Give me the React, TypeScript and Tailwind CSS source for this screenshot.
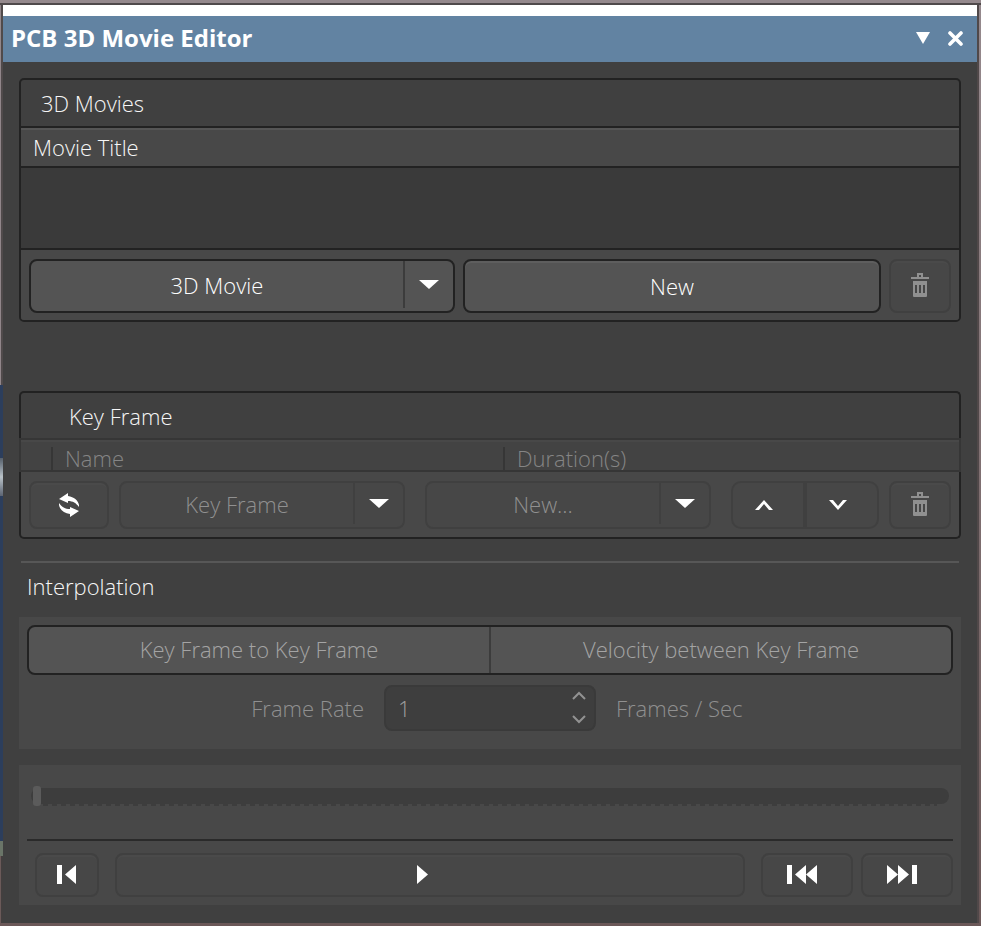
import React from "react";

const dimButton =
  "flex items-center justify-center rounded-lg border-2 border-[#404040] bg-[#474747] shadow-[inset_0_2px_0_#4a4a4a]";

function CaretDown() {
  return (
    <svg width="20" height="9" viewBox="0 0 20 9" aria-hidden="true">
      <path d="M0 0H20L10 9Z" fill="#fff" />
    </svg>
  );
}

function Trash() {
  return (
    <svg width="18" height="25" viewBox="0 0 18 25" aria-hidden="true" fill="#909090">
      <path fillRule="evenodd" d="M6 0H12V4H18V6H0V4H6ZM8 2V4H10V2Z" />
      <path
        fillRule="evenodd"
        d="M2 8H16V23Q16 24 15 24H3Q2 24 2 23ZM4 12V20H6V12ZM8 12V20H10V12ZM12 12V20H14V12Z"
      />
    </svg>
  );
}

function Refresh() {
  return (
    <svg width="20" height="24" viewBox="0 0 20 24" aria-hidden="true" fill="#fff">
      <path d="M0 6L9 0V3C15 4 19 7 20 12V14C17 10 14 8 9 8V10Z" />
      <path d="M20 18L11 24V21C5 20 1 17 0 12V10C3 14 6 16 11 16V14Z" />
    </svg>
  );
}

function Chevron({ up = false }: { up?: boolean }) {
  return (
    <svg width="18" height="10" viewBox="0 0 18 10" aria-hidden="true">
      <path d={up ? "M0 10L9 0L18 10H14L9 4L4 10Z" : "M0 0L9 10L18 0H14L9 6L4 0Z"} fill="#fff" />
    </svg>
  );
}

function SpinArrow({ up = false }: { up?: boolean }) {
  return (
    <svg width="14" height="9" viewBox="0 0 14 9" aria-hidden="true">
      <path d={up ? "M1 8L7 2L13 8" : "M1 1L7 7L13 1"} fill="none" stroke="#929292" strokeWidth="2" />
    </svg>
  );
}

function SplitButton({
  label,
  menuLabel,
  className,
  divider,
}: {
  label: string;
  menuLabel: string;
  className: string;
  divider: string;
}) {
  return (
    <div className={`flex rounded-lg border-2 ${className}`}>
      <button type="button" className="flex-1 pb-[2px]">
        {label}
      </button>
      <button
        type="button"
        aria-label={menuLabel}
        aria-haspopup="menu"
        className={`mb-[3px] flex w-[50px] items-center justify-center border-l-2 ${divider}`}
      >
        <CaretDown />
      </button>
    </div>
  );
}

function LeftEdge() {
  return (
    <div className="flex w-[3px] shrink-0 flex-col" aria-hidden="true">
      <div className="h-[380px] border-r-2 border-[#504a4b] bg-[#91868a]" />
      <div className="h-[73px] bg-[#2c3e5c]" />
      <div className="h-[38px] bg-gradient-to-b from-[#56606c] via-[#b9c2c8] to-[#5c6472]" />
      <div className="h-[345px] bg-[#2c3e5c]" />
      <div className="h-[15px] bg-[#6a7568]" />
      <div className="flex-1 border-r-2 border-[#433f3f] bg-[#6b5a59]" />
    </div>
  );
}

export default function App() {
  return (
    <div className="flex min-h-screen flex-col border-b-[3px] border-[#6b5858] bg-[#95898d] font-['Open_Sans','Noto_Sans',sans-serif] text-[22px] leading-7 font-light text-[#f6f6f6]">
      <div className="h-[3px]" />
      <div className="h-[2px] bg-[#504a4b]" />
      <div className="flex flex-1">
        <LeftEdge />
        <main className="flex min-w-0 flex-1 flex-col bg-[#404040]">
          <div className="h-[11px] bg-white" />
          <header className="flex h-[46px] items-center bg-[#6283a2] pr-[14px] pb-[2px] pl-2 text-white">
            <h1 className="flex-1 text-2xl leading-7 font-bold">PCB 3D Movie Editor</h1>
            <button type="button" aria-label="Panel options" className="mr-[18px]">
              <svg width="14" height="12" viewBox="0 0 14 12" aria-hidden="true">
                <path d="M0 0H14L7 12Z" fill="#fff" />
              </svg>
            </button>
            <button type="button" aria-label="Close">
              <svg width="15" height="15" viewBox="0 0 15 15" aria-hidden="true">
                <path d="M2 2L13 13M13 2L2 13" stroke="#fff" strokeWidth="3.6" strokeLinecap="round" />
              </svg>
            </button>
          </header>

          <div className="flex flex-col px-4 pt-4">
            <section className="overflow-hidden rounded-[5px] border-2 border-[#222]">
              <h2 className="flex h-[46px] items-center px-5">3D Movies</h2>
              <div className="h-[124px] border-y-2 border-[#222] bg-[#3a3a3a]">
                <table className="w-full border-collapse">
                  <thead>
                    <tr>
                      <th className="h-[39px] border-b-2 border-[#222] bg-[#484848] px-3 text-left font-light shadow-[inset_0_2px_0_#555]">
                        Movie Title
                      </th>
                    </tr>
                  </thead>
                </table>
              </div>
              <div className="flex gap-2 bg-[#484848] px-2 pt-[9px] pb-[7px] text-white">
                <SplitButton
                  label="3D Movie"
                  menuLabel="3D Movie menu"
                  className="h-[54px] flex-[426] border-[#222] bg-[#545454]"
                  divider="border-[#3c3c3c]"
                />
                <button
                  type="button"
                  className="h-[54px] flex-[418] rounded-lg border-2 border-[#222] bg-[#545454] shadow-[inset_0_2px_0_#5e5e5e]"
                >
                  New
                </button>
                <button type="button" disabled aria-label="Delete movie" className={`h-[54px] w-[62px] pb-[2px] ${dimButton}`}>
                  <Trash />
                </button>
              </div>
            </section>

            <section className="mt-[69px]">
              <h2 className="flex h-[47px] items-center rounded-t-[5px] border-2 border-b-0 border-[#222] px-12">
                Key Frame
              </h2>
              <div className="h-[34px] overflow-hidden border-2 border-[#363636] bg-[#434343] shadow-[inset_0_2px_0_#484848]">
                <table className="mt-[7px] w-full table-fixed border-collapse leading-[23px] text-[#858585]">
                  <thead>
                    <tr>
                      <td className="w-[31px] p-0" />
                      <th className="w-[452px] border-l-2 border-[#363636] p-0 pl-3 text-left font-light">Name</th>
                      <th className="border-l-2 border-[#363636] p-0 pl-3 text-left font-light">Duration(s)</th>
                    </tr>
                  </thead>
                </table>
              </div>
              <div className="flex rounded-b-[5px] border-2 border-t-0 border-[#222] bg-[#484848] px-2 pt-[9px] pb-2 text-[#909090]">
                <button type="button" aria-label="Refresh" className={`h-12 w-20 ${dimButton}`}>
                  <Refresh />
                </button>
                <SplitButton
                  label="Key Frame"
                  menuLabel="Key Frame menu"
                  className="ml-[10px] h-12 flex-1 border-[#404040] bg-[#474747]"
                  divider="border-[#404040]"
                />
                <SplitButton
                  label="New..."
                  menuLabel="New key frame menu"
                  className="ml-5 h-12 flex-1 border-[#404040] bg-[#474747]"
                  divider="border-[#404040]"
                />
                <div className="ml-5 flex h-12 w-[148px] rounded-[10px] border-2 border-[#404040] bg-[#474747]">
                  <button
                    type="button"
                    aria-label="Move up"
                    className="flex flex-1 items-center justify-center border-r-2 border-[#404040] pr-2"
                  >
                    <Chevron up />
                  </button>
                  <button
                    type="button"
                    aria-label="Move down"
                    className="flex flex-1 items-center justify-center border-l-2 border-[#404040] pr-2"
                  >
                    <Chevron />
                  </button>
                </div>
                <button
                  type="button"
                  disabled
                  aria-label="Delete key frame"
                  className={`ml-[10px] h-12 w-[62px] pb-[2px] ${dimButton}`}
                >
                  <Trash />
                </button>
              </div>
            </section>

            <hr className="mx-[2px] mt-[22px] border-t-2 border-[#575757]" />
            <h2 className="flex h-[54px] items-center px-2 pb-2">Interpolation</h2>

            <section className="h-[132px] bg-[#484848] p-2 text-[#909090]">
              <div className="flex h-[50px] rounded-lg border-2 border-[#222] bg-[#545454] text-[#a4a4a4]">
                <button type="button" className="flex-1 border-r-2 border-[#3c3c3c] pb-[2px]">
                  Key Frame to Key Frame
                </button>
                <button type="button" className="flex-1 pb-[2px]">
                  Velocity between Key Frame
                </button>
              </div>
              <div className="mt-[10px] grid grid-cols-[1fr_212px_1fr] items-center gap-5">
                <label htmlFor="frame-rate" className="text-right">
                  Frame Rate
                </label>
                <div className="flex h-[46px] rounded-lg border-2 border-[#3a3a3a] bg-[#3e3e3e]">
                  <input
                    id="frame-rate"
                    type="text"
                    inputMode="numeric"
                    defaultValue="1"
                    className="min-w-0 flex-1 bg-transparent px-3 text-[#a0a0a0] outline-none"
                  />
                  <div className="flex w-[30px] flex-col items-center justify-between pt-1 pb-[5px]">
                    <button type="button" aria-label="Increase frame rate">
                      <SpinArrow up />
                    </button>
                    <button type="button" aria-label="Decrease frame rate">
                      <SpinArrow />
                    </button>
                  </div>
                </div>
                <span>Frames / Sec</span>
              </div>
            </section>

            <section className="mt-4 bg-[#484848] p-2">
              <div className="px-1 pt-[13px]">
                <input
                  type="range"
                  aria-label="Playback position"
                  min={0}
                  max={100}
                  defaultValue={0}
                  className="block h-5 w-full appearance-none bg-[repeating-linear-gradient(90deg,#3d3d3d_0_5px,#484848_5px_9px)] bg-[length:calc(100%_-_24px)_2px] bg-[position:12px_18px] bg-no-repeat [&::-webkit-slider-runnable-track]:h-4 [&::-webkit-slider-runnable-track]:rounded-lg [&::-webkit-slider-runnable-track]:bg-[#3d3d3d] [&::-webkit-slider-runnable-track]:px-[2px] [&::-webkit-slider-thumb]:-mt-[2px] [&::-webkit-slider-thumb]:h-5 [&::-webkit-slider-thumb]:w-2 [&::-webkit-slider-thumb]:appearance-none [&::-webkit-slider-thumb]:rounded-[3px] [&::-webkit-slider-thumb]:bg-[#5b5b5b]"
                />
              </div>
              <div className="mt-[33px] border-t-2 border-[#2a2a2a]" />
              <div className="mt-3 flex pl-2">
                <button type="button" aria-label="Go to start" className={`h-11 w-16 pb-[2px] ${dimButton}`}>
                  <svg width="20" height="19" viewBox="0 0 20 19" fill="#fff" aria-hidden="true">
                    <path d="M0 0H5V19H0ZM19 0V19L8 9.5Z" />
                  </svg>
                </button>
                <button type="button" aria-label="Play" className={`ml-4 h-11 flex-1 pr-4 pb-[2px] ${dimButton}`}>
                  <svg width="11" height="19" viewBox="0 0 11 19" fill="#fff" aria-hidden="true">
                    <path d="M0 0L11 9.5L0 19Z" />
                  </svg>
                </button>
                <button
                  type="button"
                  aria-label="Previous key frame"
                  className={`ml-4 h-11 w-[92px] pr-[10px] pb-[2px] ${dimButton}`}
                >
                  <svg width="30" height="19" viewBox="0 0 30 19" fill="#fff" aria-hidden="true">
                    <path d="M0 0H5V19H0ZM19 0V19L8 9.5ZM30 0V19L19 9.5Z" />
                  </svg>
                </button>
                <button
                  type="button"
                  aria-label="Next key frame"
                  className={`ml-2 h-11 w-[92px] pr-[10px] pb-[2px] ${dimButton}`}
                >
                  <svg width="30" height="19" viewBox="0 0 30 19" fill="#fff" aria-hidden="true">
                    <path d="M0 0L11 9.5L0 19ZM11 0L22 9.5L11 19ZM25 0H30V19H25Z" />
                  </svg>
                </button>
              </div>
            </section>
          </div>
        </main>
        <div className="w-1 shrink-0 border-l-2 border-[#504849] bg-gradient-to-b from-[#95898d] to-[#6b5858]" aria-hidden="true" />
      </div>
    </div>
  );
}
